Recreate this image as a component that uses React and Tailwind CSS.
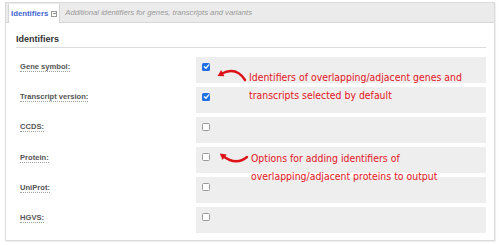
import React from "react";

const rows = [
  { label: "Gene symbol:", checked: true },
  { label: "Transcript version:", checked: true },
  { label: "CCDS:", checked: false },
  { label: "Protein:", checked: false },
  { label: "UniProt:", checked: false },
  { label: "HGVS:", checked: false },
];

function Box({ checked }) {
  return checked ? (
    <div className="w-[8px] h-[8px] rounded-[1.5px] bg-[#1f6fe5] flex items-center justify-center">
      <svg width="7" height="7" viewBox="0 0 10 10">
        <path d="M2 5.3 L4.2 7.5 L8.2 2.6" fill="none" stroke="#fff" strokeWidth="1.8" strokeLinecap="round" strokeLinejoin="round" />
      </svg>
    </div>
  ) : (
    <div className="w-[8px] h-[8px] rounded-[1.5px] bg-white border border-[#9a9a9a]" />
  );
}

export default function App() {
  return (
    <div className="relative w-[500px] h-[245px] bg-white overflow-hidden" style={{ fontFamily: '"Liberation Sans", Arial, sans-serif' }}>
      <div className="mx-[5px] mt-[2px] h-[239px] border border-[#dadada] shadow-[1px_1px_1px_rgba(0,0,0,0.06)] flex flex-col">
        <div className="h-[20px] bg-[#ebebeb] border-b border-[#d6d6d6] flex items-end pl-[2px]">
          <div className="h-[19px] bg-white border-l border-r border-[#d6d6d6] -mb-px px-[2px] flex items-center gap-[3px]">
            <span className="text-[7.8px] font-bold text-[#3f66d0] leading-none">Identifiers</span>
            <span className="w-[6px] h-[6px] border border-[#9a9a9a] flex items-center justify-center">
              <span className="w-[3px] h-px bg-[#8a8a8a]" />
            </span>
          </div>
          <div className="h-[19px] flex items-center pl-[5px] text-[7.7px] italic text-[#9a9a9a] leading-none">
            Additional identifiers for genes, transcripts and variants
          </div>
        </div>
        <div className="flex-1 bg-white pl-[10px] pr-[8px] pt-[11px]">
          <div className="text-[9px] font-bold text-[#333] leading-[11px] pb-[1.5px] border-b border-[#dcdcdc]">
            Identifiers
          </div>
          <div className="mt-[9px] flex flex-col gap-[4.2px]">
            {rows.map((r) => (
              <div key={r.label} className="flex h-[26px]">
                <div className="w-[180px] pl-[4px] pt-[5.5px] flex items-start leading-none">
                  <span className="text-[7.6px] font-bold text-[#555] leading-[9px] border-b border-dotted border-[#a0a0a0]">
                    {r.label}
                  </span>
                </div>
                <div className="flex-1 bg-[#eeeeee] pl-[6px] pt-[6px] leading-none">
                  <Box checked={r.checked} />
                </div>
              </div>
            ))}
          </div>
        </div>
      </div>

      <svg className="absolute left-0 top-0 pointer-events-none" width="500" height="245">
        <path d="M245 80 Q236 66 221 74" fill="none" stroke="#dd1118" strokeWidth="2.4" strokeLinecap="round" />
        <polygon points="217.5,75.9 224.4,76.2 221.2,70.0" fill="#dd1118" />
        <path d="M247 157 Q236 166 223 156" fill="none" stroke="#dd1118" strokeWidth="2.4" strokeLinecap="round" />
        <polygon points="219.8,153.6 226.7,154.4 222.5,160.0" fill="#dd1118" />
      </svg>

      <div className="absolute left-[249px] top-[68px] text-[#e3131b] text-[10.4px] leading-[18px] font-medium" style={{ fontFamily: '"DejaVu Sans Condensed", "DejaVu Sans", sans-serif', fontStretch: "condensed" }}>
        <div>Identifiers of overlapping/adjacent genes and</div>
        <div>transcripts selected by default</div>
      </div>
      <div className="absolute left-[251px] top-[149px] text-[#e3131b] text-[10.4px] leading-[18px] font-medium" style={{ fontFamily: '"DejaVu Sans Condensed", "DejaVu Sans", sans-serif', fontStretch: "condensed" }}>
        <div>Options for adding identifiers of</div>
        <div>overlapping/adjacent proteins to output</div>
      </div>
    </div>
  );
}
